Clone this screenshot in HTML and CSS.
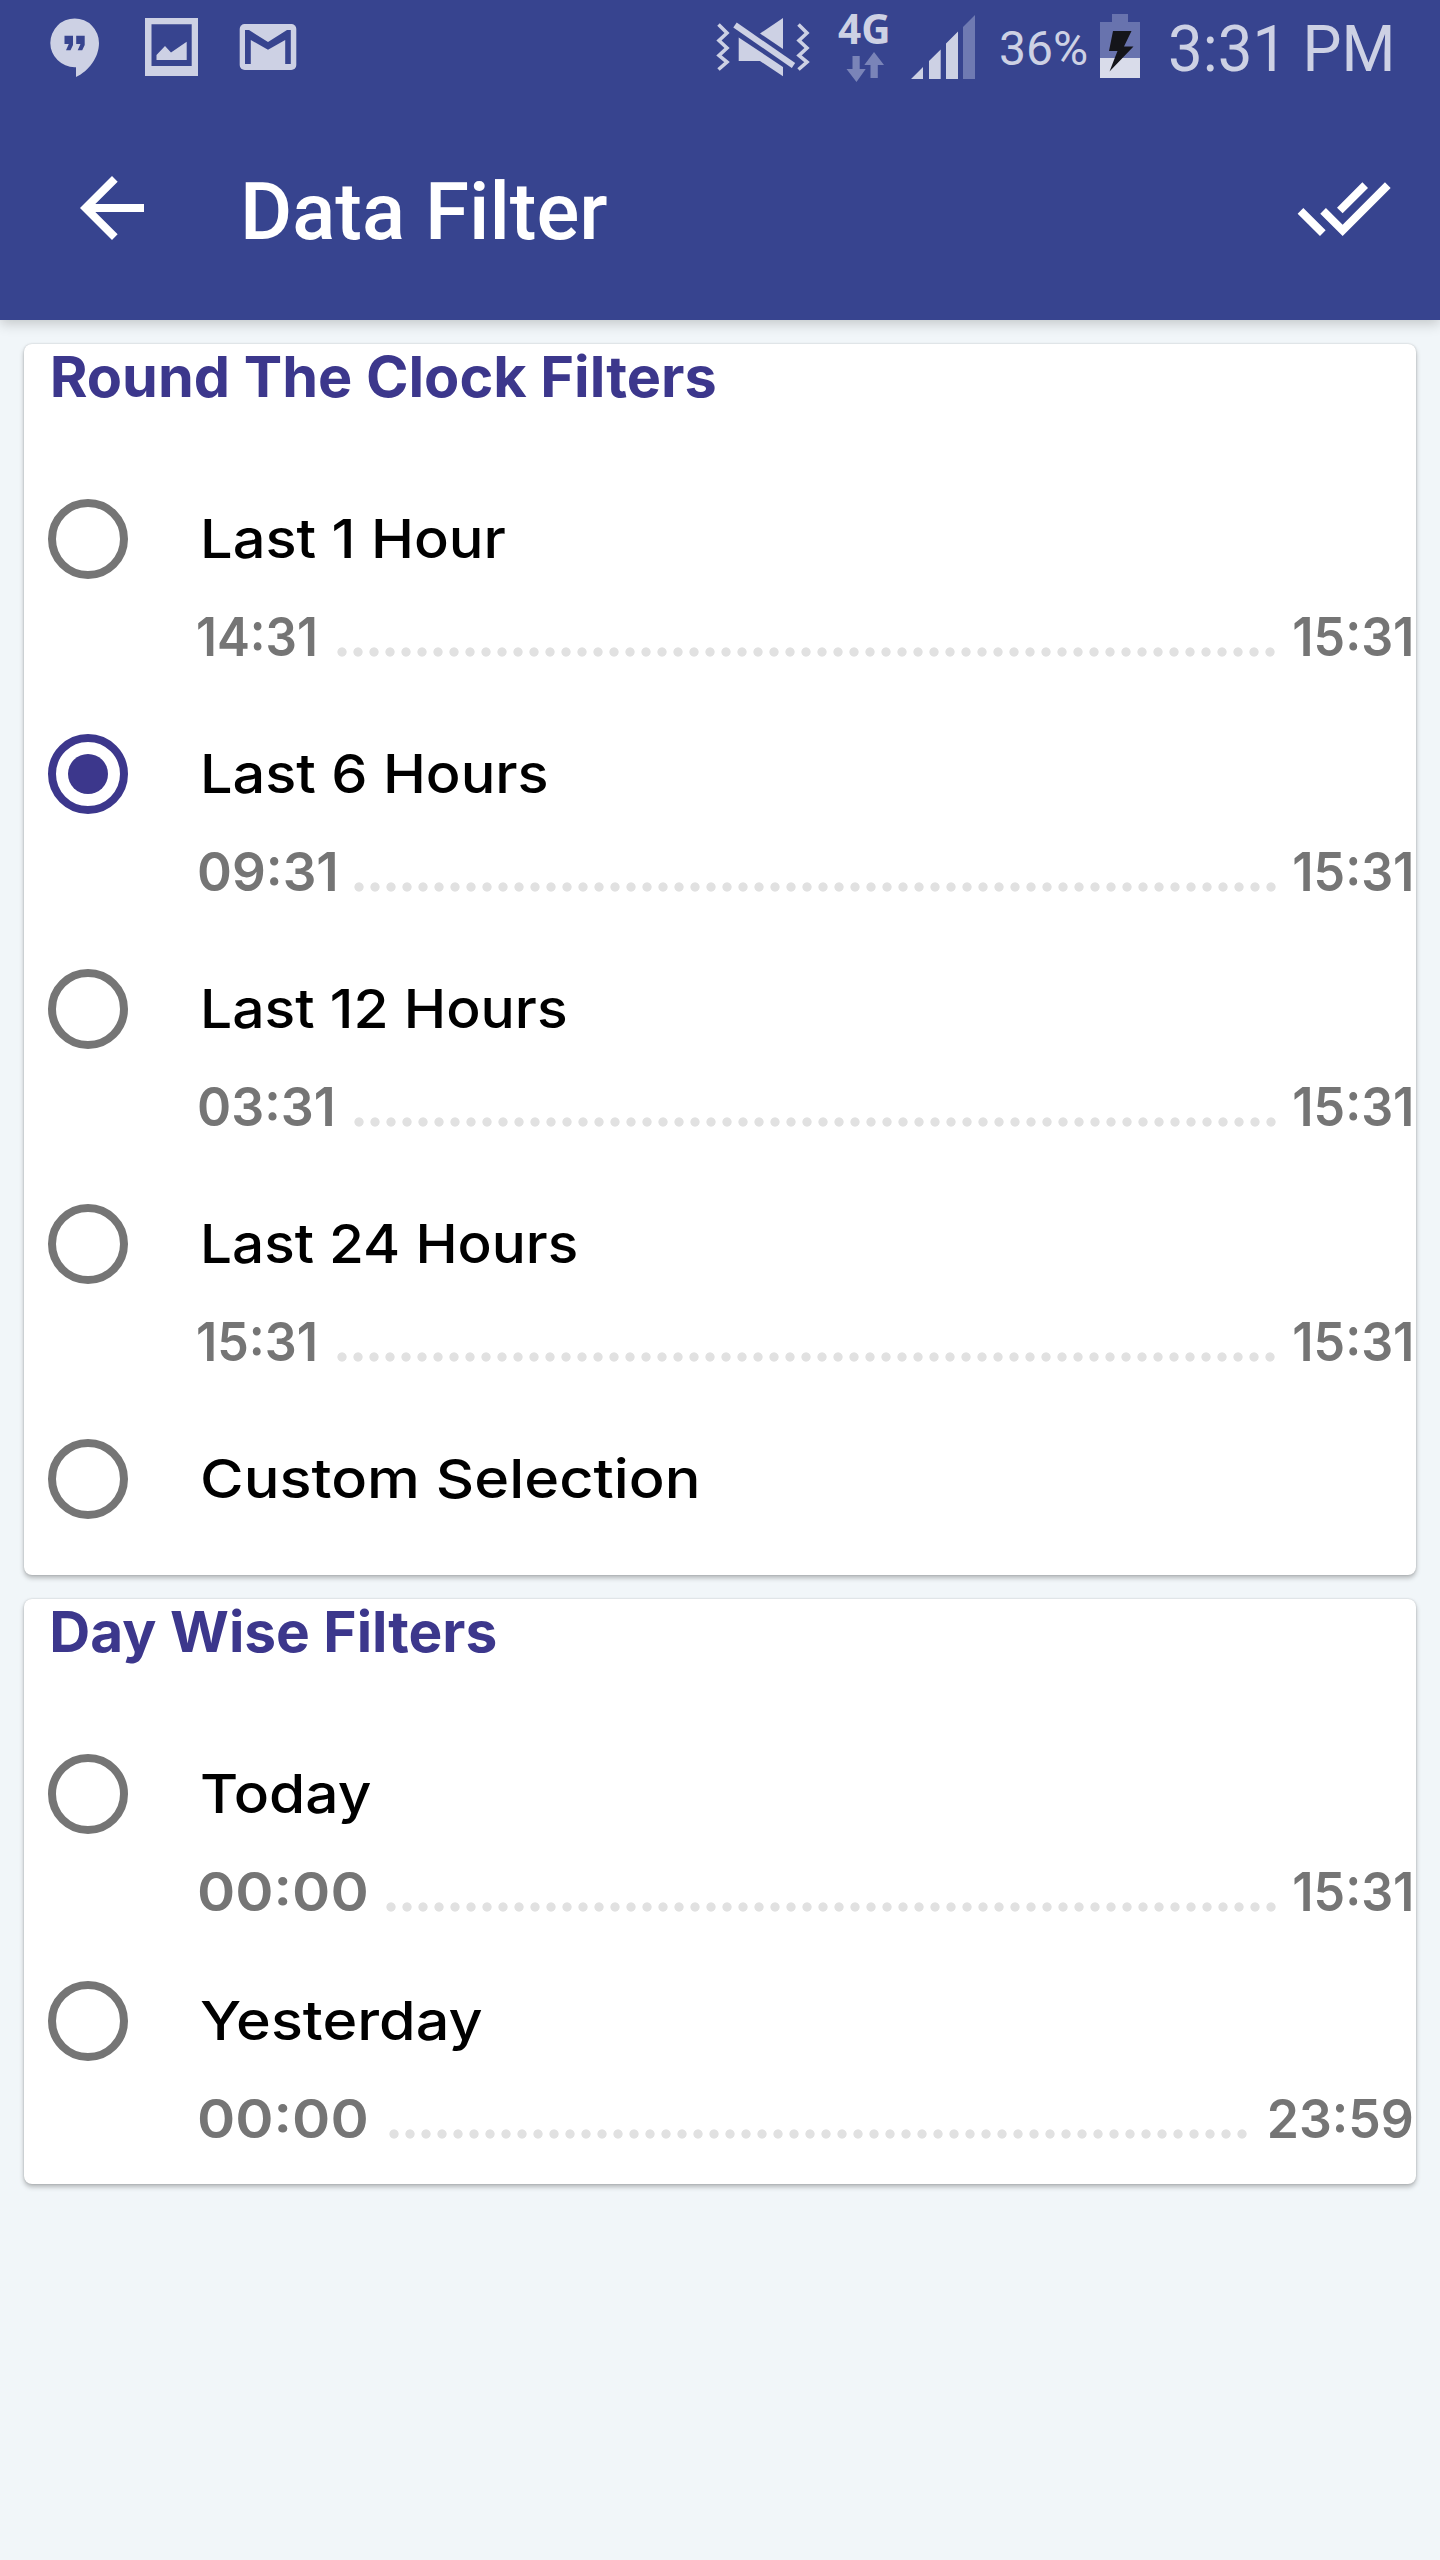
FILE: index.html
```
<!DOCTYPE html>
<html lang="en">
<head>
<meta charset="utf-8">
<title>Data Filter</title>
<link rel="stylesheet" href="styles.css">
</head>
<body>
<header class="header">
  <div class="status">
    <svg class="ic-chat" viewBox="50 16 50 64" width="50" height="64"><path fill="#cdd1e4" d="M74.700 18.500A24.400 24.400 0 0 0 50.300 43 24.400 24.400 0 0 0 74.700 67.200H76V77C89 71 99 57 99 43A24.300 24.300 0 0 0 74.700 18.500Z"/><path fill="#37448f" d="M64.500 35.800H73V45L70.500 50.200H66L68.800 44H64.500ZM76.200 35.800H84.700V45L82.200 50.200H77.700L80.500 44H76.200Z"/></svg>
    <svg class="ic-pic" viewBox="145 16 53 64" width="53" height="64"><path fill="#cdd1e4" fill-rule="evenodd" d="M145 18H198V76H145ZM151.500 24.300V66H191.700V24.300ZM156.500 60V55L165 46 171 52.500 186.700 41.800V60Z"/></svg>
    <svg class="ic-mail" viewBox="239 16 58 64" width="58" height="64"><rect x="239.700" y="24" width="56.600" height="46" rx="5" fill="#cdd1e4"/><path fill="#37448f" d="M245 64V30H249L268 42 287 30H290.800V64H285.200V40L268 49.700 250.800 40V64Z"/></svg>
    <span class="grow"></span>
    <svg class="ic-mute" viewBox="715 12 96 68" width="96" height="68"><g fill="#cdd1e4"><path d="M783 18V49L760 33.500Z"/><path d="M738.700 37.500 783 67V76.300L760 61H738.700Z"/></g><g fill="none" stroke="#cdd1e4"><path stroke-width="6" d="M735 25 793.500 65.500"/><path stroke-width="3.600" d="M718.500 24.500 727 33 719 40.500 727 48 719 55.500 727 62 718.500 69.500M798.500 24.500 807 33 799 40.500 807 48 799 55.500 807 62 798.500 69.500"/></g></svg>
    <div class="net">
      <span class="net-label">4G</span>
      <svg viewBox="844 50 42 34" width="42" height="34"><path fill="#7a84b8" d="M852.500 56H859.700V69H865.700L856.500 82 846.500 69H852.500ZM874 52 884 65H877.800V78H870.500V65H864.300Z"/></svg>
    </div>
    <svg class="ic-signal" viewBox="910 12 66 70" width="66" height="70"><path fill="#cdd1e4" d="M911 79 923 67V79ZM929 79V61L940.700 49.500V79ZM946 79V43.500L958 31.500V79Z"/><path fill="#6f7ab2" d="M963 79V27L975 15V79Z"/></svg>
    <span class="percent">36%</span>
    <svg class="ic-batt" viewBox="1100 12 40 68" width="40" height="68"><path fill="#6873ae" d="M1112 14H1128V22H1140V58H1100V22H1112Z"/><path fill="#d9dcea" d="M1100 58H1140V78H1100Z"/><path fill="#14151a" d="M1113 31H1131.500L1124 46.500H1133.500L1109.500 71.500 1117.500 51H1109Z"/></svg>
    <span class="clock">3:31 PM</span>
  </div>
  <div class="appbar">
    <svg viewBox="0 0 24 24" width="96" height="96"><path fill="#fff" d="M20 11H7.830l5.590-5.590L12 4l-8 8 8 8 1.410-1.410L7.830 13H20v-2z"/></svg>
    <h1 class="title">Data Filter</h1>
    <svg viewBox="0 0 24 24" width="96" height="96" overflow="visible"><path fill="#fff" d="M18 7l-1.410-1.410-6.340 6.340 1.410 1.410L18 7zm4.240-1.410L11.660 16.170 7.480 12l-1.410 1.410L11.660 19l12-12-1.420-1.410zM.41 13.410L6 19l1.410-1.410L1.830 12 .41 13.410z"/></svg>
  </div>
</header>
<main class="content">
  <section class="card">
    <h2 class="heading" style="--stretch:1.028">Round The Clock Filters</h2>
    <div class="option">
      <div class="pick"><span class="radio"></span><span class="label" style="--stretch:1.069">Last 1 Hour</span></div>
      <div class="range"><span class="from one" style="--stretch:.915">14:31</span><span class="dots" style="--n:59;--end:138px"></span><span class="to" style="--stretch:.93">15:31</span></div>
    </div>
    <div class="option">
      <div class="pick"><span class="radio on"></span><span class="label" style="--stretch:1.067">Last 6 Hours</span></div>
      <div class="range"><span class="from" style="--stretch:.98">09:31</span><span class="dots" style="--n:58;--end:137px"></span><span class="to" style="--stretch:.93">15:31</span></div>
    </div>
    <div class="option">
      <div class="pick"><span class="radio"></span><span class="label" style="--stretch:1.055">Last 12 Hours</span></div>
      <div class="range"><span class="from" style="--stretch:.96">03:31</span><span class="dots" style="--n:58;--end:137px"></span><span class="to" style="--stretch:.93">15:31</span></div>
    </div>
    <div class="option">
      <div class="pick"><span class="radio"></span><span class="label" style="--stretch:1.049">Last 24 Hours</span></div>
      <div class="range"><span class="from one" style="--stretch:.93">15:31</span><span class="dots" style="--n:59;--end:138px"></span><span class="to" style="--stretch:.93">15:31</span></div>
    </div>
    <div class="option">
      <div class="pick"><span class="radio"></span><span class="label" style="--stretch:1.102">Custom Selection</span></div>
    </div>
  </section>
  <section class="card compact">
    <h2 class="heading" style="--stretch:1.014">Day Wise Filters</h2>
    <div class="option">
      <div class="pick"><span class="radio"></span><span class="label" style="--stretch:1.085">Today</span></div>
      <div class="range"><span class="from" style="--stretch:1.075">00:00</span><span class="dots" style="--n:56;--end:137px"></span><span class="to" style="--stretch:.93">15:31</span></div>
    </div>
    <div class="option">
      <div class="pick"><span class="radio"></span><span class="label" style="--stretch:1.098">Yesterday</span></div>
      <div class="range"><span class="from" style="--stretch:1.075">00:00</span><span class="dots" style="--n:54;--end:166px"></span><span class="to" style="--stretch:.957">23:59</span></div>
    </div>
  </section>
</main>
</body>
</html>
```
FILE: styles.css
```
* { box-sizing: border-box; }
body {
  margin: 0;
  min-height: 2560px;
  background: #f1f6f9;
  font-family: Inter, "Noto Sans", sans-serif;
}
svg { display: block; flex: none; }

/* Header */
.header {
  height: 320px;
  background: #37448f;
  box-shadow: 0 4px 12px rgba(0, 0, 0, .19);
  font-family: Roboto, sans-serif;
}
.status {
  display: flex;
  align-items: flex-start;
  height: 96px;
  padding: 0 49px 0 50px;
  color: #cdd1e4;
  white-space: nowrap;
}
.ic-chat, .ic-pic, .ic-mail { margin-top: 16px; }
.ic-pic { margin-left: 45px; }
.ic-mail { margin-left: 41px; }
.grow { flex: 1; }
.ic-mute, .ic-signal, .ic-batt { margin-top: 12px; }
.net {
  width: 50px;
  margin-left: 27px;
  padding-top: 8px;
}
.net svg { margin: 2px 0 0 6px; }
.net-label {
  display: block;
  font: 700 42px/40px "Open Sans", sans-serif;
  transform: scaleX(.965);
  transform-origin: left;
}
.ic-signal { margin-left: 22px; }
.percent {
  width: 89px;
  margin-left: 23px;
  font-size: 48px;
  line-height: 98px;
}
.ic-batt { margin-left: 12px; }
.clock {
  width: 223px;
  margin-left: 28px;
  font-size: 64px;
  line-height: 100px;
  transform: scaleX(.966);
  transform-origin: left;
}
.appbar {
  display: flex;
  align-items: center;
  height: 224px;
  padding: 0 48px 0 64px;
}
.title {
  flex: 1;
  margin: 0;
  padding: 7px 0 0 80px;
  color: #fff;
  font-size: 80px;
  font-weight: 500;
  line-height: 96px;
}

/* Cards */
.content {
  display: flex;
  flex-direction: column;
  gap: 24px;
  padding: 24px;
}
.card {
  padding-bottom: 16px;
  border-radius: 8px;
  background: #fff;
  box-shadow: 0 3px 5px rgba(0, 0, 0, .26), 0 0 2px rgba(0, 0, 0, .18);
}
.heading {
  margin: 0 0 48px;
  padding-left: 25px;
  color: #3c378c;
  font-size: 56px;
  font-weight: 700;
  line-height: 67px;
}
.heading, .label, .from, .to {
  white-space: nowrap;
  transform: scaleX(var(--stretch));
  transform-origin: left;
}
.pick {
  display: flex;
  align-items: center;
  height: 160px;
  padding-left: 24px;
}
.radio {
  display: grid;
  place-items: center;
  width: 80px;
  height: 80px;
  border: 8px solid #757575;
  border-radius: 50%;
}
.radio.on { border-color: #3c378c; }
.radio.on::after {
  content: "";
  width: 40px;
  height: 40px;
  border-radius: 50%;
  background: #3c378c;
}
.label {
  margin-left: 72px;
  color: #000;
  font-size: 54px;
  font-weight: 500;
  line-height: 78px;
}
.range {
  display: grid;
  grid-template-columns: auto 1fr auto;
  align-items: start;
  height: 75px;
  padding-left: 173px;
  color: #757575;
  font-size: 54px;
  font-weight: 600;
  line-height: 35px;
}
.range > * { grid-row: 1; }
.from { grid-column: 1; }
.from.one { margin-left: -1px; }
.dots {
  grid-column: 1 / 4;
  justify-self: end;
  width: calc(var(--n) * 16px);
  height: 10px;
  margin: 28px var(--end) 0 0;
  background: radial-gradient(circle at 8px 5px, #e1e1e1 4.200px, transparent 5px) 0 0 / 16px 10px repeat-x;
}
.to {
  grid-column: 3;
  padding-right: 2px;
  transform-origin: right;
}
.compact .range { height: 67px; }
```
